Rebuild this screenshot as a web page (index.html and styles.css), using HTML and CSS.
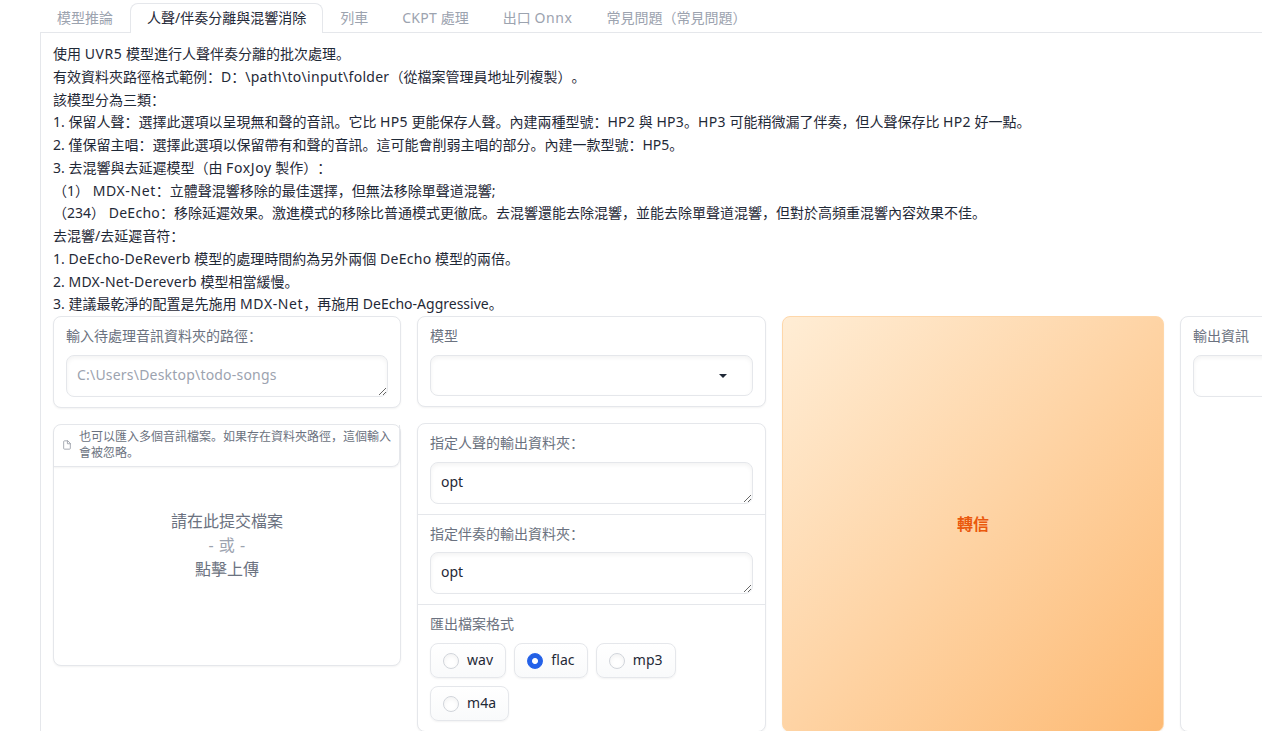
FILE: index.html
```
<!DOCTYPE html>
<html lang="zh-CN">
<head>
    <meta charset="UTF-8">
    <title>RVC WebUI</title>
    <link rel="stylesheet" href="styles.css">
</head>
<body>
    <div class="app">
        <div class="tab-nav">
            <button>模型推論</button>
            <button class="selected">人聲/伴奏分離與混響消除</button>
            <button>列車</button>
            <button><span class="latin">CKPT</span> 處理</button>
            <button>出口 <span class="latin-wide">Onnx</span></button>
            <button>常見問題（常見問題）</button>
        </div>
        <div class="tab-item">
            <div class="intro">
                <p>使用 <span class="latin-wide">UVR5</span> 模型進行人聲伴奏分離的批次處理。</p>
                <p>有效資料夾路徑格式範例：D：<span class="latin">\path\to\input\folder</span>（從檔案管理員地址列複製）。</p>
                <p>該模型分為三類：</p>
                <p>1. 保留人聲：選擇此選項以呈現無和聲的音訊。它比 <span class="latin">HP5</span> 更能保存人聲。內建兩種型號：<span class="latin">HP2</span> 與 <span class="latin">HP3</span>。<span class="latin">HP3</span> 可能稍微漏了伴奏，但人聲保存比 <span class="latin">HP2</span> 好一點。</p>
                <p>2. 僅保留主唱：選擇此選項以保留帶有和聲的音訊。這可能會削弱主唱的部分。內建一款型號：HP5。</p>
                <p>3. 去混響與去延遲模型（由 <span class="latin-wide">FoxJoy</span> 製作）：</p>
                <p>（1） <span class="latin-wide">MDX-Net</span>：立體聲混響移除的最佳選擇，但無法移除單聲道混響;</p>
                <p>（234） <span class="latin">DeEcho</span>：移除延遲效果。激進模式的移除比普通模式更徹底。去混響還能去除混響，並能去除單聲道混響，但對於高頻重混響內容效果不佳。</p>
                <p>去混響/去延遲音符：</p>
                <p>1. <span class="latin">DeEcho-DeReverb</span> 模型的處理時間約為另外兩個 <span class="latin">DeEcho</span> 模型的兩倍。</p>
                <p>2. <span class="latin">MDX-Net-Dereverb</span> 模型相當緩慢。</p>
                <p>3. 建議最乾淨的配置是先施用 <span class="latin-wide">MDX-Net</span>，再施用 DeEcho-Aggressive。</p>
            </div>
            <div class="row">
                <div class="column">
                    <div class="card">
                        <div class="block">
                            <label for="input-dir">輸入待處理音訊資料夾的路徑：</label>
                            <textarea id="input-dir" rows="1" placeholder="C:\Users\Desktop\todo-songs"></textarea>
                        </div>
                    </div>
                    <div class="card upload">
                        <div class="upload-label">
                            <svg viewBox="0 0 24 24" fill="none" stroke="currentColor" stroke-width="2" stroke-linecap="round" stroke-linejoin="round"><path d="M13 2H6a2 2 0 0 0-2 2v16a2 2 0 0 0 2 2h12a2 2 0 0 0 2-2V9z"/><path d="M13 2v7h7"/></svg>
                            <span>也可以匯入多個音訊檔案。如果存在資料夾路徑，這個輸入會被忽略。</span>
                        </div>
                        <div class="upload-text">
                            <div>請在此提交檔案</div>
                            <div class="or">- 或 -</div>
                            <div>點擊上傳</div>
                        </div>
                    </div>
                </div>
                <div class="column">
                    <div class="card">
                        <div class="block">
                            <label>模型</label>
                            <div class="dropdown">
                                <svg viewBox="0 0 18 18"><path d="M5 8l4 4 4-4z"/></svg>
                            </div>
                        </div>
                    </div>
                    <div class="card">
                        <div class="block">
                            <label for="vocal-dir">指定人聲的輸出資料夾：</label>
                            <textarea id="vocal-dir" rows="1">opt</textarea>
                        </div>
                        <div class="block">
                            <label for="ins-dir">指定伴奏的輸出資料夾：</label>
                            <textarea id="ins-dir" rows="1">opt</textarea>
                        </div>
                        <div class="block">
                            <label>匯出檔案格式</label>
                            <div class="radios">
                                <label class="radio"><input type="radio" name="format"><span>wav</span></label>
                                <label class="radio"><input type="radio" name="format" checked><span>flac</span></label>
                                <label class="radio"><input type="radio" name="format"><span>mp3</span></label>
                                <label class="radio"><input type="radio" name="format"><span>m4a</span></label>
                            </div>
                        </div>
                    </div>
                </div>
                <button class="convert">轉信</button>
                <div class="card">
                    <div class="block">
                        <label for="info">輸出資訊</label>
                        <textarea id="info" rows="1"></textarea>
                    </div>
                </div>
            </div>
        </div>
    </div>
</body>
</html>
```
FILE: styles.css
```
* {
    box-sizing: border-box;
}

body {
    margin: 0;
    background: #fff;
    color: #1f2937;
    font-family: "Noto Sans", "Noto Sans CJK SC", sans-serif;
    font-size: 14px;
    text-spacing-trim: space-all;
}

button, textarea {
    font-family: inherit;
}

.latin {
    letter-spacing: 0.28px;
}

.latin-wide {
    letter-spacing: 0.6px;
}

.app {
    height: 731px;
    padding: 3px 0 0 40px;
    overflow: hidden;
}

/* tabs */
.tab-nav {
    display: flex;
    height: 30px;
    border-bottom: 1px solid #e5e7eb;
}

.tab-nav button {
    flex: none;
    height: 30px;
    padding: 0 16px 2px;
    border: 1px solid transparent;
    border-bottom: none;
    border-radius: 8px 8px 0 0;
    background: none;
    color: #9ca3af;
    font-size: 14px;
    line-height: 26px;
    white-space: nowrap;
}

.tab-nav .selected {
    border-color: #e5e7eb;
    background: #fff;
    color: #1f2937;
}

.tab-item {
    padding: 10px 12px;
    border-left: 1px solid #e5e7eb;
}

.intro p {
    margin: 0;
    line-height: 22.75px;
    white-space: nowrap;
}

/* form */
.row {
    display: grid;
    grid-template-columns: 348px 349px 382px 349px;
    gap: 16px;
    height: 415px;
}

.column {
    display: flex;
    flex-direction: column;
    gap: 16px;
}

.card {
    border: 1px solid #e5e7eb;
    border-radius: 8px;
    background: #fff;
    box-shadow: 0 1px 2px rgba(0, 0, 0, 0.05);
}

.block {
    padding: 10px 12px;
}

.block + .block {
    border-top: 1px solid #e5e7eb;
}

.block > label {
    display: block;
    margin-bottom: 9px;
    color: #6b7280;
    line-height: 18.8px;
}

textarea, .dropdown {
    display: block;
    width: 100%;
    height: 42px;
    padding: 9px 10px;
    border: 1px solid #e5e7eb;
    border-radius: 8px;
    background: #fff;
    box-shadow: inset 0 2px 4px rgba(0, 0, 0, 0.05);
    color: #1f2937;
    font-size: 14px;
    line-height: 20px;
}

textarea {
    resize: vertical;
    overflow: hidden;
}

textarea::placeholder {
    color: #9ca3af;
    letter-spacing: 0.2px;
}

.dropdown {
    display: flex;
    align-items: center;
    justify-content: flex-end;
    height: 41px;
    padding-right: 20px;
}

.dropdown svg {
    width: 18px;
    fill: #1f2937;
}

.radios {
    display: flex;
    flex-wrap: wrap;
    gap: 8px;
}

.radio {
    display: flex;
    align-items: center;
    gap: 8px;
    height: 35px;
    padding: 0 12px;
    border: 1px solid #e5e7eb;
    border-radius: 8px;
    background: linear-gradient(to bottom, #fff, #f9fafb);
    box-shadow: 0 1px 2px rgba(0, 0, 0, 0.05);
    letter-spacing: 0.1px;
}

.radio span {
    padding-bottom: 2px;
}

.radio input {
    appearance: none;
    width: 16px;
    height: 16px;
    margin: 1px 0 0;
    border: 1px solid #d1d5db;
    border-radius: 50%;
    background: #fff;
    box-shadow: inset 0 2px 4px rgba(0, 0, 0, 0.05);
}

.radio input:checked {
    border-color: #2563eb;
    background: radial-gradient(circle, #fff 2.5px, #2563eb 3.5px);
}

/* file upload */
.upload {
    position: relative;
    height: 242px;
}

.upload-label {
    position: absolute;
    top: 0;
    left: 0;
    display: flex;
    align-items: center;
    width: 346px;
    height: 42px;
    padding: 0 8px;
    border-right: 1px solid #e5e7eb;
    border-bottom: 1px solid #e5e7eb;
    border-radius: 8px 0 8px 0;
    box-shadow: 0 1px 2px rgba(0, 0, 0, 0.05);
    color: #6b7280;
    font-size: 12px;
    line-height: 16px;
}

.upload-label svg {
    flex: none;
    width: 10px;
    height: 10px;
    margin-right: 7px;
    opacity: 0.7;
}

.upload-label span {
    width: 316px;
    flex: none;
}

.upload-text {
    display: flex;
    flex-direction: column;
    justify-content: center;
    height: 240px;
    color: #6b7280;
    font-size: 16px;
    line-height: 24px;
    text-align: center;
}

.or {
    color: #9ca3af;
    letter-spacing: 0.5px;
}

.convert {
    padding-bottom: 3px;
    border: 1px solid #fed7aa;
    border-radius: 8px;
    background: linear-gradient(to bottom right, #ffedd5, #fdba74);
    box-shadow: 0 1px 2px rgba(0, 0, 0, 0.05);
    color: #ea580c;
    font-size: 16px;
    font-weight: 600;
}
```
